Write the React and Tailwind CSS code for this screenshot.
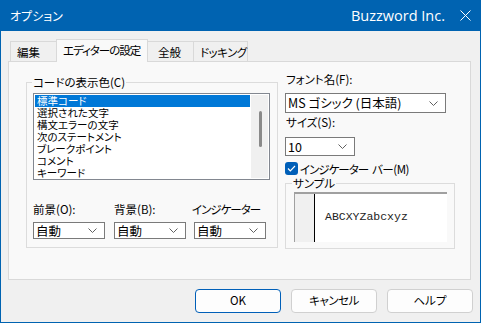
import React from 'react';

const jp = "font-['Noto_Sans_CJK_JP','Noto_Sans',sans-serif] [font-feature-settings:'palt']";

const Chevron = ({ className = '' }) => (
  <svg className={className} width="9" height="5" viewBox="0 0 9 5" fill="none">
    <path d="M0.5 0.5L4.5 4.5L8.5 0.5" stroke="#606060" strokeWidth="1" />
  </svg>
);

const Select = ({ value, className = '', textClass = '' }) => (
  <div className={`flex items-center justify-between border border-[#7a7a7a] bg-white pl-[2px] pr-[7px] ${className}`}>
    <span className={`leading-[14px] text-black ${textClass}`}>{value}</span>
    <Chevron />
  </div>
);

const items = [
  '標準コード',
  '選択された文字',
  '構文エラーの文字',
  '次のステートメント',
  'ブレークポイント',
  'コメント',
  'キーワード',
];

export default function App() {
  return (
    <div className={`w-[481px] h-[323px] flex flex-col bg-[#0063b1] whitespace-nowrap ${jp}`}>
      {/* title bar */}
      <div className="h-[31px] flex items-center text-white">
        <span className="ml-[10px] text-[12px] leading-none">オプション</span>
        <span className="ml-auto font-['Open_Sans','Noto_Sans',sans-serif] text-[14.5px] leading-none mt-[2px]">Buzzword Inc.</span>
        <svg className="ml-[15px] mr-[10px]" width="11" height="11" viewBox="0 0 11 11">
          <path d="M0.5 0.5L10.5 10.5M10.5 0.5L0.5 10.5" stroke="white" strokeWidth="1" />
        </svg>
      </div>

      <div className="flex-1 mx-px mb-px bg-[#f0f0f0] flex flex-col">
        {/* tabs */}
        <div className="mt-[8px] ml-[9px] h-[23px] flex items-end text-[11.5px] leading-[14px] text-black">
          <div className="w-[47px] h-[21px] border border-b-0 border-[#d9d9d9] bg-[#f0f0f0] flex items-center pl-[6px]">編集</div>
          <div className="relative z-10 -ml-px w-[92px] h-[23px] border border-b-0 border-[#d9d9d9] bg-[#f9f9f9] flex items-center pl-[6px] pb-[2px] tracking-[-1px]">エディターの設定</div>
          <div className="-ml-px w-[47px] h-[21px] border border-b-0 border-[#d9d9d9] bg-[#f0f0f0] flex items-center pl-[10px]">全般</div>
          <div className="-ml-px w-[55px] h-[21px] border border-b-0 border-[#d9d9d9] bg-[#f0f0f0] flex items-center pl-[6px] tracking-[-0.5px]">ドッキング</div>
        </div>

        {/* panel */}
        <div className="-mt-px ml-[7px] w-[463px] h-[219px] border border-[#d9d9d9] bg-[#f9f9f9] flex items-start text-black">
          <fieldset className="ml-[17px] mt-[13px] w-[252px] h-[173px] border border-[#dcdcdc] pl-[6px]">
            <legend className="px-px -ml-px text-[11.5px] leading-[14px]">コードの表示色(C)</legend>
            <div className="mt-[4px] w-[237px] h-[87px] border border-[#828790] bg-white p-px flex">
              <div className="w-[216px] flex flex-col">
                {items.map((it, i) => (
                  <div
                    key={it}
                    className={`h-[12px] pl-[2px] text-[10.5px] leading-[12px] ${i === 0 ? 'bg-[#0078d7] text-white' : 'text-black'}`}
                  >
                    {it}
                  </div>
                ))}
              </div>
              <div className="ml-px w-[17px] bg-[#f0f0f0] flex justify-center">
                <div className="mt-[16px] w-[3px] h-[36px] bg-[#8a8a8a] rounded-full ml-[2px]" />
              </div>
            </div>
            <div className="mt-[22px] flex text-[11.5px] leading-[14px]">
              <div className="w-[72px]">
                <div>前景(O):</div>
                <Select value="自動" className="mt-[6px] h-[17px]" textClass="text-[12.5px]" />
              </div>
              <div className="ml-[9px] w-[72px]">
                <div>背景(B):</div>
                <Select value="自動" className="mt-[6px] h-[17px]" textClass="text-[12.5px]" />
              </div>
              <div className="ml-[8px] w-[72px]">
                <div className="-ml-[2px] tracking-[-1px]">インジケーター</div>
                <Select value="自動" className="mt-[6px] h-[17px]" textClass="text-[12.5px]" />
              </div>
            </div>
          </fieldset>

          <div className="ml-[7px] mt-[10px] flex flex-col text-[11.5px] leading-[14px]">
            <div className="ml-px">フォント名(F):</div>
            <Select value="MS ゴシック (日本語)" className="mt-[7px] w-[161px] h-[20px]" textClass="text-[12.5px]" />
            <div className="mt-[2px] ml-px">サイズ(S):</div>
            <Select value="10" className="mt-[8px] w-[70px] h-[19px]" textClass="text-[12.5px]" />
            <div className="mt-[6px] flex items-center h-[13px]">
              <div className="w-[13px] h-[13px] rounded-[3px] bg-[#005fb8] flex items-center justify-center">
                <svg width="9" height="7" viewBox="0 0 9 7" fill="none">
                  <path d="M1 3.5L3.3 5.8L8 1" stroke="white" strokeWidth="1.2" />
                </svg>
              </div>
              <span className="ml-[2px] tracking-[-1px]">インジケーター</span>
              <span className="ml-[4px] tracking-[-0.5px]">バー(M)</span>
            </div>
            <fieldset className="mt-px w-[170px] h-[73px] border border-[#dcdcdc] pl-[6px]">
              <legend className="px-px text-[11.5px] leading-[14px]">サンプル</legend>
              <div className="mt-[2px] ml-[2px] w-[153px] h-[50px] flex border-t-2 border-l border-[#a0a0a0] bg-white">
                <div className="w-[20px] bg-[#f0f0f0] border-r-[1.5px] border-black" />
                <div className="flex-1 flex items-center pl-[10px] pb-[2px] font-['Liberation_Mono',monospace] text-[11.5px] text-[#222]">
                  ABCXYZabcxyz
                </div>
              </div>
            </fieldset>
          </div>
        </div>

        {/* buttons */}
        <div className="mt-[9px] pr-[7px] flex justify-end gap-[10px] text-[11.5px] text-black">
          <button className="w-[86px] h-[24px] rounded-[4px] border border-[#005fb8] bg-[#fdfdfd]">OK</button>
          <button className="w-[86px] h-[24px] rounded-[4px] border border-[#d0d0d0] bg-[#fdfdfd] tracking-[-0.5px]">キャンセル</button>
          <button className="w-[86px] h-[24px] rounded-[4px] border border-[#d0d0d0] bg-[#fdfdfd]">ヘルプ</button>
        </div>
      </div>
    </div>
  );
}
